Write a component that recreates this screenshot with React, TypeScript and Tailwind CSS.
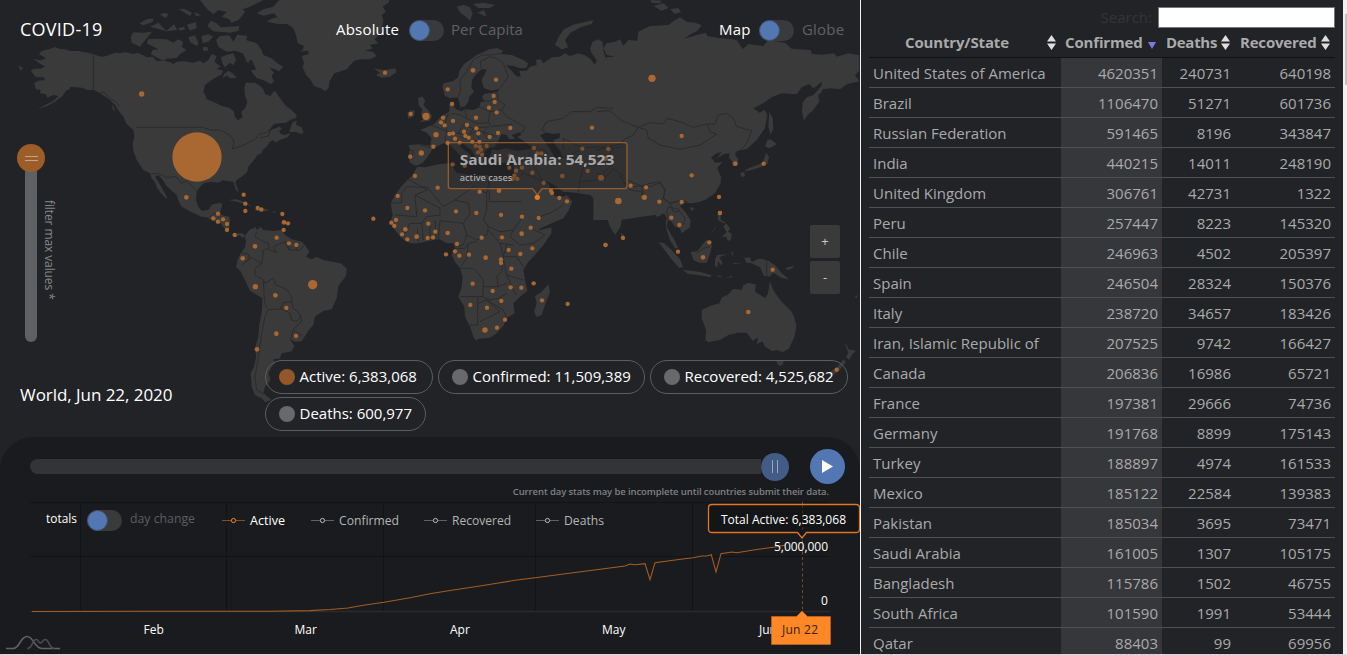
import React from "react";
import { clsx } from "clsx";

const countries: [string, number, number, number][] = [
  ["United States of America", 4620351, 240731, 640198],
  ["Brazil", 1106470, 51271, 601736],
  ["Russian Federation", 591465, 8196, 343847],
  ["India", 440215, 14011, 248190],
  ["United Kingdom", 306761, 42731, 1322],
  ["Peru", 257447, 8223, 145320],
  ["Chile", 246963, 4502, 205397],
  ["Spain", 246504, 28324, 150376],
  ["Italy", 238720, 34657, 183426],
  ["Iran, Islamic Republic of", 207525, 9742, 166427],
  ["Canada", 206836, 16986, 65721],
  ["France", 197381, 29666, 74736],
  ["Germany", 191768, 8899, 175143],
  ["Turkey", 188897, 4974, 161533],
  ["Mexico", 185122, 22584, 139383],
  ["Pakistan", 185034, 3695, 73471],
  ["Saudi Arabia", 161005, 1307, 105175],
  ["Bangladesh", 115786, 1502, 46755],
  ["South Africa", 101590, 1991, 53444],
  ["Qatar", 88403, 99, 69956],
];

type Dot = [number, number, number?];
type Region = { dx: number; dy: number; land: string; water?: string; borders: string; dots: Dot[] };

/* Every region is drawn in thirds of a pixel, shifted by dx / dy. */
const northAmerica: Region = {
  dx: 0,
  dy: 0,
  land:
    "M100,177L122,181 138,174 117,163 122,155 135,150 148,148 165,141 180,147 195,148 210,153 235,153 255,157 280,162 295,168 310,170 325,166 345,158 360,160 375,156 400,162 412,158 430,166 440,172 458,170 470,183 495,182 512,187 520,193 530,185 552,184 580,188 600,182 610,190 625,180 635,162 650,168 643,185 662,200 650,207 670,212 664,224 655,228 635,240 615,255 610,275 618,288 620,298 640,305 665,318 690,324 702,335 705,352 715,361 727,352 724,335 735,325 742,305 735,288 733,262 738,248 765,248 780,257 790,268 795,282 812,288 818,278 825,272 840,295 855,315 875,330 890,345 888,354 870,360 858,368 840,370 822,372 812,385 800,397 818,388 838,380 846,386 838,392 840,400 852,405 872,399 862,412 840,420 825,428 820,420 810,425 800,440 788,450 785,460 773,464 762,480 745,500 742,515 728,528 710,540 706,550 713,565 716,578 708,570 700,545 680,543 670,540 655,548 635,545 612,550 600,560 590,575 588,600 595,620 605,632 625,630 635,614 660,608 667,613 660,640 668,646 688,650 690,665 688,685 685,697 700,704 715,700 728,700 735,708 730,714 718,706 707,712 690,700 675,688 660,668 640,664 620,652 605,650 575,637 545,620 535,602 530,585 515,572 500,558 488,540 475,525 465,530 478,550 490,572 503,595 496,594 482,578 470,562 466,548 455,535 450,520 430,510 410,480 405,465 400,455 398,430 403,412 400,390 380,372 370,350 358,335 345,315 330,300 312,287 300,280 280,270 262,270 245,263 225,262 212,260 208,268 198,272 188,288 165,305 140,319 112,328 135,316 160,302 175,288 160,285 142,293 138,283 120,280 122,270 108,268 102,250 115,242 135,240 132,232 108,232 92,212 102,206 122,206 135,200 118,190Z" +
    "M390,374L412,386 406,392 385,378ZM352,320L358,326 352,330ZM336,316L342,322 346,335 338,328ZM868,396L876,370 890,360 888,374 905,382 911,398 902,402 888,396ZM57,196L70,205 60,212ZM684,600L710,598 738,608 758,620 735,612 705,604ZM762,630L784,624 808,630 785,637ZM815,634L826,634 824,638Z" +
    "M395,128L392,112 400,97 430,98 456,95 440,115 420,140ZM440,130L445,118 470,116 500,118 520,128 535,118 550,126 545,140 560,150 540,162 530,174 500,176 490,182 470,172 452,163 458,150 475,148ZM450,80L476,68 490,84 500,92 522,72 532,90 500,94ZM418,70L440,58 460,55 458,66 430,76ZM480,44L492,38 506,42 498,54ZM536,27L552,26 576,38 570,48ZM582,36L605,46 588,48ZM600,0L790,0 750,20 728,28 735,36 716,60 694,68 688,58 666,50 680,36 656,30 640,42 624,30 612,16ZM622,78L632,62 650,70 662,82 718,78 716,92 690,98 640,94ZM560,74L588,66 590,84 570,92ZM604,108L625,103 640,110 625,125 608,130ZM565,112L585,106 596,130 590,138 570,126ZM535,84L552,80 556,88 540,92Z" +
    "M648,120L660,108 688,106 700,125 712,104 742,108 738,120 770,130 785,150 790,165 815,175 832,190 850,200 838,214 824,208 808,202 822,218 815,228 822,245 812,252 790,240 770,234 752,212 768,208 755,180 740,184 728,160 705,152 680,155 655,140ZM662,172L680,165 700,160 708,180 700,195 690,188 675,202 668,192ZM672,222L685,212 700,222 710,234 690,235 680,226 668,236ZM608,142L622,140 625,152 610,152ZM736,182L748,178 746,190Z" +
    "M838,0L820,20 790,28 770,40 790,47 822,40 832,52 814,56 800,65 835,72 862,72 880,85 888,105 893,130 912,138 908,150 896,155 924,152 926,162 905,168 912,190 908,202 918,225 932,240 942,258 962,265 975,273 986,265 988,245 1003,220 1040,208 1062,182 1082,178 1110,178 1130,168 1118,155 1095,152 1118,145 1110,135 1135,130 1124,118 1145,95 1150,60 1145,45 1158,35 1148,20 1168,6 1166,0Z",
  borders:
    "M280,162V270L300,280 312,276 330,296 345,303 358,318M410,382H608L630,390 660,390 690,405 700,420 702,432 696,447 725,438 765,418 778,402 800,397M780,413L805,408 812,388M450,522L475,520 500,532 528,530 545,550 560,542 578,560 590,574M625,655L640,640 655,640",
  dots: [[425, 282, 8], [591, 471, 74], [559, 592, 7], [731, 584], [736, 611], [736, 633], [773, 624], [784, 628], [847, 642], [654, 641], [640, 655], [669, 658]],
};

const southAmerica: Region = {
  dx: 0,
  dy: 600,
  land:
    "M735,108L748,90 766,82 772,90 782,80 790,90 820,93 845,90 855,104 875,118 905,125 915,135 928,155 918,170 935,178 950,170 970,180 1005,187 1022,190 1040,205 1038,228 1015,258 1010,295 995,328 970,333 945,350 940,375 925,392 915,408 905,424 885,425 870,418 883,438 875,454 845,460 840,475 820,478 825,490 815,500 805,520 812,540 795,560 790,580 815,600 795,607 785,595 765,585 755,560 752,520 762,500 768,470 766,440 775,410 778,375 786,330 787,295 750,272 735,240 722,215 708,200 713,178 722,160 735,142 738,125Z",
  borders:
    "M770,95L765,110 790,125 805,130 808,150 830,158 820,140 855,125 868,150 885,150 900,150 912,135M722,158L745,162 748,178 725,195M748,170L785,190 788,172 790,150 805,145M788,190L765,205 765,225 790,240 795,250 820,235 828,255 860,268 875,290 875,305 850,308 840,328 805,328 795,350 785,400 778,450 772,490 765,530 770,570 792,582M790,240L793,300 800,325M842,325L870,340 875,360 890,365 902,350 895,335 880,325 875,305M902,345L905,365 880,388 872,418M880,390L908,408M870,128L866,150M892,128L888,150",
  dots: [[654, 65], [681, 72], [681, 90], [704, 105], [852, 67, 7], [864, 70], [851, 90], [830, 113], [765, 139, 7], [867, 130], [889, 135], [728, 175, 7], [766, 260, 8], [826, 286, 7], [938, 254, 14], [859, 324], [829, 401, 7], [888, 408], [771, 448, 7]],
};

const europe: Region = {
  dx: 990,
  dy: 0,
  land:
    "M337,262L340,250 368,244 385,232 388,212 402,192 420,180 440,165 462,155 478,148 500,144 520,152 512,162 545,165 580,180 594,190 590,203 570,205 552,198 528,196 548,215 558,228 572,230 568,212 590,212 600,200 620,195 618,180 632,178 640,190 665,172 690,170 705,160 720,168 745,160 765,166 782,178 795,195 800,180 785,160 780,145 788,125 805,118 818,126 820,150 828,180 835,195 850,205 850,610 800,610 782,585 735,578 700,575 680,560 655,545 640,545 650,565 665,592 680,602 695,588 712,602 726,608 715,632 700,655 620,690 598,672 580,640 562,610 545,580 540,560 548,540 552,510 550,485 520,490 495,485 480,470 485,450 500,440 500,420 495,440 475,445 465,455 462,470 458,495 448,490 435,470 425,450 400,432 388,420 380,425 395,445 420,462 425,475 410,485 405,490 398,475 375,450 355,432 340,430 320,440 308,445 300,460 290,475 278,488 258,498 240,488 234,470 240,450 236,435 270,433 300,437 305,415 290,398 270,390 290,382 312,372 328,355 345,342 358,335 358,312 372,302 374,325 390,332 390,318 384,292 360,294 345,288Z" +
    "M264,293L278,290 286,302 280,315 296,332 306,348 300,362 268,367 282,355 272,342 278,330 266,315ZM232,340L240,332 254,330 253,348 235,356ZM130,205L145,208 165,210 195,205 200,216 180,230 155,233 138,226 150,218ZM380,20L400,14 420,22 428,40 420,62 405,48 392,40ZM428,12L460,8 495,14 480,24 445,24ZM442,38L462,30 470,50ZM675,135L685,112 702,88 730,74 790,60 785,72 752,82 722,98 705,120 715,142 695,148Z",
  water:
    "M392,320L404,320 415,305 418,290 432,275 424,262 426,240 436,225 455,208 470,208 465,222 454,240 462,265 485,272 510,266 502,275 475,280 462,282 456,292 464,302 452,306 448,322 430,330 405,328 390,335ZM500,440L505,420 515,402 530,405 538,418 555,416 545,405 565,398 575,403 562,412 585,425 605,440 600,448 560,452 530,445 505,450 488,450ZM630,405L650,398 670,402 690,400 688,415 670,420 680,440 692,455 695,470 675,475 665,455 655,440 645,425Z",
  borders:
    "M384,292L392,270 390,240 410,215 430,180 455,165 480,165 515,160M455,208L450,185 480,170 500,175 520,190 535,230 510,265M500,272L505,300 525,315 515,330 530,350 585,380 580,395 560,400M455,305L500,300M450,322L480,335 515,330M480,335L475,365 485,380 545,372M405,330L410,355 390,345 365,340M410,355L440,370 475,368M300,375L330,385 350,395 345,425M355,342L345,370 350,395 385,400 400,375 430,385 480,380M385,400L420,405 440,390 470,400 500,410M430,385L420,400M390,410L420,420 450,425 495,425M440,395L450,425 455,450M470,385L460,400 475,420M240,450L250,452 245,480M270,435L312,445M850,325L800,322 780,335 725,335 700,355 650,365 635,390 650,400M700,415L730,430 760,445 800,440 850,445M700,415V450M600,440L640,450 655,460M600,455L595,480 555,485M595,480L620,510 640,545M695,470L740,475 760,500 750,540 745,578M690,475L720,465 760,445M760,500L800,495 830,470M750,545L800,540 850,490M555,485L580,520 550,545M580,520L620,535 640,545",
  dots: [[165, 218], [429, 211, 7], [498, 239], [353, 268], [366, 312], [491, 288], [494, 306], [477, 323], [500, 337], [438, 353], [242, 342], [288, 349, 11], [339, 353], [333, 367], [344, 376], [369, 363], [318, 404, 8], [411, 375], [439, 385], [445, 400], [541, 384], [402, 395], [358, 402], [369, 400], [406, 408], [416, 413], [375, 416], [389, 428], [353, 429], [310, 440], [274, 459, 8], [241, 470], [479, 411], [504, 399], [427, 426], [448, 426], [437, 438], [449, 440], [453, 449], [470, 438], [444, 457], [456, 464], [786, 383], [612, 444], [622, 460], [634, 460], [540, 467], [757, 446], [835, 447], [255, 528], [323, 563], [368, 493], [404, 497], [449, 575], [507, 572, 7], [538, 503], [558, 512], [576, 503], [607, 518], [553, 527], [548, 537], [562, 537], [641, 549], [697, 528, 7], [773, 513], [813, 533, 9], [203, 588], [232, 624], [285, 631], [378, 634], [439, 639], [513, 645], [663, 573], [666, 579], [688, 594], [711, 604], [130, 656]],
};

const asia: Region = {
  dx: 1800,
  dy: 0,
  land:
    "M-20,210L0,202 18,172 45,170 20,165 10,145 20,130 45,125 60,118 70,138 85,120 112,122 115,95 150,78 205,75 225,60 240,52 262,66 285,68 305,76 292,92 270,104 252,116 290,105 318,98 322,108 360,115 400,118 412,122 428,147 445,132 490,138 505,120 555,128 575,146 632,150 636,162 665,164 702,160 710,170 745,160 778,166 778,212 765,225 778,244 742,252 720,268 690,265 668,268 665,276 655,285 658,305 640,330 622,346 612,362 606,335 608,308 620,292 640,285 664,258 666,244 650,258 640,265 628,252 605,262 590,283 545,280 515,292 490,310 460,325 478,338 494,330 502,345 495,385 470,420 440,448 412,452 405,465 415,478 410,498 398,498 395,482 386,472 390,460 372,462 350,475 365,456 350,460 333,472 345,488 368,486 352,503 362,530 362,550 345,580 315,600 285,608 260,605 200,640 60,660 -20,660Z" +
    "M508,335L518,355 520,385 512,405 505,380ZM502,420L512,418 530,432 518,440 506,445 495,438ZM498,458L507,470 502,492 480,502 455,510 432,514 445,505 470,496 488,488ZM420,520L432,515 435,528 425,532ZM150,0L185,2 180,10 155,8ZM160,18L190,10 206,24 185,32ZM210,28L235,24 243,36 225,42Z",
  borders:
    "M-10,335L30,332 65,362 115,382 150,368 190,372 200,355 240,365 280,382 320,372 345,372 355,345 380,340 400,355 410,380 455,392 440,430 425,448 405,458M320,372L330,395 350,402 300,435 240,448 180,435 145,415 140,390 115,382 100,405 70,420 65,440 40,445 30,465 0,470M-10,450L65,430M-10,520L20,530 40,505 60,520 70,545 95,560 125,558 150,560 180,548 195,570 190,595 210,610 240,602 262,605M70,545L90,570 125,575 130,600",
  dots: [[156, 235, 11], [245, 408], [406, 491, 7], [491, 491], [275, 526], [357, 591], [55, 603, 10], [92, 557], [138, 562], [133, 592, 8], [178, 605], [245, 606], [360, 639], [214, 653], [25, 447], [15, 475, 8]],
};

const africa: Region = {
  dx: 1020,
  dy: 540,
  land:
    "M200,2L215,-12 232,-40 255,-38 300,-48 338,-50 340,-35 350,-22 385,-15 400,-5 415,-15 440,-15 470,0 505,-5 525,15 540,60 555,90 570,120 580,140 600,150 635,142 634,160 610,195 585,225 565,245 550,270 555,300 562,332 540,350 520,370 524,400 498,415 492,435 470,460 450,473 415,476 408,482 400,470 390,440 375,410 373,380 355,350 365,320 368,290 360,265 345,245 335,225 345,205 340,190 320,190 300,178 270,182 235,190 210,190 185,175 165,150 150,130 158,105 152,70 165,45 185,18Z" +
    "M625,313L630,335 615,375 605,405 590,411 582,395 590,370 585,348 605,335ZM515,0L530,40 560,90 578,120 582,132 600,130 640,115 670,95 697,65 680,45 662,55 640,45 625,10Z",
  borders:
    "M152,70L185,68V40L200,20 262,22M200,-5L262,30 225,45 230,110 165,105M262,22L310,80 345,60 400,20M225,45L300,85 300,105 260,110 245,130 210,130M345,60L385,70 390,100 370,130 300,122 295,178M400,20L440,40 448,0V65H545M440,40V90L430,120 445,140 440,165 410,180 380,165 370,195 350,200M370,130L380,165M445,140L480,155 520,150 545,115M520,150L510,170 540,195 580,190 615,165 575,145M445,150L480,190 520,195M340,205L375,205 385,190 410,185M385,190L380,235 360,262M480,190L490,230 485,275 470,290 475,320 430,320 428,350 360,350M360,265L400,265 415,280 430,300V320M500,195L490,230 530,230 550,260M490,235L500,285 550,300M500,285L520,330 530,345M475,320L500,310M428,350L450,360 475,355 500,340M413,352V435L380,437M415,370L440,360 490,390 500,415M440,360L480,395 420,425M245,130L250,180M270,130V180M285,120L288,180M210,130L195,160 185,175M232,145L235,188M585,125L600,110 640,95 670,75",
  dots: [[154, 128], [168, 120], [163, 138], [186, 163], [196, 148, 7], [202, 178], [230, 170, 7], [265, 131], [263, 174], [279, 172], [286, 155], [323, 159, 7], [351, 192], [425, 173], [486, 172], [345, 214], [358, 227], [387, 224], [318, 223], [437, 233, 7], [545, 161, 7], [546, 110], [572, 143], [577, 205], [506, 210], [541, 222], [483, 238], [483, 249], [514, 266], [398, 311], [458, 333], [512, 322], [544, 323], [581, 310], [484, 363], [391, 375], [441, 383], [495, 419], [435, 450, 8], [471, 443], [606, 361], [683, 372], [596, 114], [797, 195]],
};

const oceania: Region = {
  dx: 1800,
  dy: 540,
  land:
    "M-20,-10L365,-10 355,20 335,45 300,65 275,70 255,68 240,78 255,95 272,120 270,142 245,160 240,145 225,140 215,125 204,120 200,138 210,158 222,178 235,205 225,205 210,180 200,150 197,130 200,115 190,95 180,108 168,110 165,85 150,65 135,60 125,65 105,75 90,90 66,112 62,140 45,165 30,140 18,105 12,65 -5,60 -20,50Z" +
    "M62,158L72,165 74,180 65,180ZM270,82L284,84 275,94ZM175,186L192,190 215,210 240,238 250,262 238,264 212,235 192,208ZM248,270L275,272 305,277 335,286 330,292 300,286 265,282ZM345,287L365,287 362,292ZM375,295L395,288 398,292ZM272,216L292,214 318,180 330,184 336,198 330,222 320,248 298,248 280,240ZM345,238L352,225 382,222 358,232 368,250 362,256 355,244 352,262 345,258ZM392,218L398,215 400,230ZM395,248L425,250 405,252ZM432,233L450,232 455,246 472,238 485,236 508,244 528,258 545,280 568,298 545,294 520,278 508,290 492,288 480,262 455,250 440,248ZM555,265L578,258 582,262 565,270ZM352,100L362,105 362,120 378,128 370,130 354,120ZM370,140L378,130 390,145 385,155 396,162 392,180 384,182 378,170 365,170 380,156ZM328,165L348,140 346,146ZM670,374L684,386ZM764,350L774,345 770,355Z" +
    "M305,390L330,378 358,370 366,352 382,345 400,326 425,330 430,315 445,308 468,314 465,335 495,354 504,340 510,304 520,330 530,345 545,365 575,395 582,410 589,435 585,465 568,505 548,516 530,510 518,514 495,500 488,485 470,492 475,472 458,482 440,458 415,458 385,465 360,480 325,487 316,480 318,450 305,415ZM528,540L552,540 548,554 540,558 532,552ZM733,487L742,498 745,508 768,512 755,525 748,540 738,532 745,518ZM730,538L738,545 715,575 695,588 685,580 712,560Z",
  borders:
    "M75,-20L60,-5M80,0L125,18 150,10 180,5 195,30 190,55 210,70 220,95 240,95 255,115 250,135M190,55L175,65M210,70L240,62 262,66M204,118L200,95 205,80 240,90M500,242V290M290,220L310,205 330,200M125,18L132,55",
  dots: [[69, 174], [16, 195], [234, 215], [328, 187], [309, 232, 7], [518, 269], [238, 135], [360, 99], [445, 396, 7], [710, 569]],
};

const regions = [northAmerica, southAmerica, europe, asia, africa, oceania];

function WorldMap() {
  return (
    <svg className="absolute inset-0 h-[437px] w-[860px]" viewBox="0 0 2580 1311">
      {regions.map((r, i) => (
        <g key={i} transform={`translate(${r.dx} ${r.dy})`}>
          <path d={r.land} fill="#3a3a3a" />
          {r.water && <path d={r.water} fill="#222326" />}
        </g>
      ))}
      {regions.map((r, i) => (
        <g key={i} transform={`translate(${r.dx} ${r.dy})`}>
          <path d={r.borders} fill="none" stroke="#28292b" strokeWidth="2.6" strokeLinejoin="round" />
        </g>
      ))}
      {regions.map((r, i) => (
        <g key={i} transform={`translate(${r.dx} ${r.dy})`} fill="#a96731">
          {r.dots.map(([x, y, radius = 6.5], j) => (
            <circle key={j} cx={x} cy={y} r={radius} />
          ))}
        </g>
      ))}
      <path
        d="M1352,428H1874Q1881,428 1881,435V559Q1881,566 1874,566H1626L1612,585 1598,566H1352Q1345,566 1345,559V435Q1345,428 1352,428Z"
        fill="#222326"
        fillOpacity="0.35"
        stroke="#b3692c"
        strokeOpacity="0.75"
        strokeWidth="4"
      />
      <circle cx="1612" cy="592" r="8" fill="#e07b2c" />
      <g fill="#a9a9aa" fontFamily="Open Sans, sans-serif" fontWeight="700">
        <text x="1379" y="494" fontSize="45" textLength="464" lengthAdjust="spacingAndGlyphs">Saudi Arabia: 54,523</text>
        <text x="1379" y="543" fontSize="28" fontWeight="600" textLength="158" lengthAdjust="spacingAndGlyphs">active cases</text>
      </g>
    </svg>
  );
}

function Toggle() {
  return (
    <span className="block h-[21px] w-[35px] rounded-full bg-[#3a3a3a]">
      <span className="block size-[21px] rounded-full border border-[#3f4f70] bg-[#5377b3]" />
    </span>
  );
}

function Stat({ label, active, className }: { label: string; active?: boolean; className: string }) {
  return (
    <div className={clsx("flex h-[34px] items-center rounded-full border border-[#5c5d5f] pl-[13px] text-[15px] text-white", className)}>
      <span className={clsx("mr-[5px] size-4 shrink-0 rounded-full", active ? "bg-[#93572a]" : "bg-[#68696c]")} />
      <span className="whitespace-nowrap pb-[2px]">{label}</span>
    </div>
  );
}

const series = [
  { name: "Active", x: 222, width: 35 },
  { name: "Confirmed", x: 311, width: 60 },
  { name: "Recovered", x: 424, width: 59 },
  { name: "Deaths", x: 536, width: 40 },
];

function Chart() {
  return (
    <svg className="block h-[153px] w-[860px]" viewBox="0 501 860 153" fontFamily="Open Sans, sans-serif" fontSize="12">
      <path d="M30,502.500H830M30,556.500H830M80.500,502V611M226.500,502V611M383.500,502V611M535.500,502V611M692.500,502V611" stroke="#121315" fill="none" />
      <path d="M30,611.500H830" stroke="#2a2b2d" strokeWidth="1.3" />
      <path
        d="M32,611.500L150,611.300 270,611.300 310,610.600 330,609.500 348,608 362,605.500 384,602.300 410,597.700 430,593.700 450,590.500 475,586.700 497,583.300 515,580.300 535,577.700 577,572.300 604,568.800 625,566 630,564 635,564.700 645,563.700 650,579.700 655,562.700 675,560 692.700,557.700 702,556 707,556 711.300,554.700 716,572 721,553.700 731.700,552 736.700,552.700 755,549.700 775,547 786,545"
        fill="none"
        stroke="#a65c21"
        strokeWidth="1.1"
      />
      <path d="M802.500,502V611" stroke="#7c4620" strokeDasharray="3 2.500" />
      {series.map((s, i) => (
        <g key={s.name}>
          <path d={`M${s.x},520.500h23`} stroke={i === 0 ? "#884c1f" : "#606164"} />
          <circle cx={s.x + 11.5} cy="520.500" r="2.100" fill="#1a1b1e" stroke={i === 0 ? "#f0852c" : "#bdbdbd"} />
          <text x={s.x + 28} y="525" textLength={s.width} fill={i === 0 ? "#ffffff" : "#b4b5b6"} lengthAdjust="spacingAndGlyphs">
            {s.name}
          </text>
        </g>
      ))}
      <g fill="#ffffff">
        <text x="46" y="523" textLength="31" lengthAdjust="spacingAndGlyphs">totals</text>
        <text x="130" y="523" textLength="65" lengthAdjust="spacingAndGlyphs" fill="#5d5e60">day change</text>
        <text x="774" y="551" textLength="54">5,000,000</text>
        <text x="821" y="605">0</text>
        <text x="143.500" y="634">Feb</text>
        <text x="294.500" y="634">Mar</text>
        <text x="450" y="634">Apr</text>
        <text x="602" y="634">May</text>
        <text x="759" y="634">Jun</text>
      </g>
      <path d="M712,504.500H856Q859.500,504.500 859.500,508V529Q859.500,532.500 856,532.500H806.500L802,538 797.500,532.500H712Q708.500,532.500 708.500,529V508Q708.500,504.500 712,504.500Z" fill="#141517" stroke="#dd7626" strokeWidth="1.300" />
      <path d="M802.500,505V532" stroke="#7c4620" strokeOpacity="0.5" strokeDasharray="3 2.500" />
      <text x="721" y="524" fill="#ffffff" textLength="125">Total Active: 6,383,068</text>
      <path d="M771.500,616.500H796.500L802,611 807.500,616.500H830.500V644.500H771.500Z" fill="#ff8726" stroke="#c76a20" strokeWidth="0.600" />
      <text x="782" y="634" fill="#33200f" textLength="36">Jun 22</text>
      <g fill="none" strokeWidth="1.600">
        <path d="M6,648.500H13C20,648.500 20,636.500 27,636.500S34,648.500 42,648.500H60" stroke="#606163" />
        <path d="M27,648.500C33,648.500 32,639.500 36,639.500C39,639.500 38,643 40.500,643C43,643 42,639.500 45.500,639.500C49,639.500 49,648 54,648.500" stroke="#4b4c4e" />
      </g>
    </svg>
  );
}

function SortIcon() {
  return (
    <svg className="h-[15px] w-[9px]" viewBox="0 0 9 15" fill="#dedede">
      <path d="M4.500,0L9,6.500H0ZM4.500,15L9,8.500H0Z" />
    </svg>
  );
}

export default function App() {
  return (
    <div className="h-[655px] w-[1347px] overflow-hidden bg-[#222326] font-['Open_Sans',sans-serif]">
      <div className="flex h-[654px]">
        <main className="flex w-[860px] shrink-0 flex-col">
          <section className="relative h-[437px]">
            <WorldMap />
            <header className="relative flex h-[60px] items-center text-[15px] text-white">
              <h1 className="ml-5 w-[316px] pb-px text-[18px] tracking-[0.25px]">COVID-19</h1>
              <span className="w-[73px] pb-[2px] tracking-[0.2px]">Absolute</span>
              <Toggle />
              <span className="ml-[7px] w-[268px] pb-[2px] text-[#606164]">Per Capita</span>
              <span className="w-[40px] pb-[2px] tracking-[0.2px]">Map</span>
              <Toggle />
              <span className="ml-[8px] pb-[2px] tracking-[0.2px] text-[#606164]">Globe</span>
            </header>

            <div className="absolute left-[17px] top-[144px] flex w-[28px] flex-col items-center">
              <span className="z-10 flex size-7 flex-col items-center justify-center gap-[3px] rounded-full bg-[#9d5d28]">
                <span className="h-px w-[13px] bg-[#c1a58c]" />
                <span className="h-px w-[13px] bg-[#c1a58c]" />
              </span>
              <span className="-mt-1 h-[174px] w-3 rounded-b-full bg-[#5f6064]" />
            </div>
            <span className="absolute left-[41px] top-[200px] whitespace-nowrap text-[12px] leading-[16px] tracking-[-0.1px] text-[#85868a] [writing-mode:vertical-rl]">filter max values *</span>

            <div className="absolute left-[810px] top-[225px] flex flex-col gap-[3px] text-[13px] text-[#c9c9c9]">
              <button className="flex h-[33px] w-[30px] items-center justify-center rounded-[2px] bg-[#3a3a3a]">+</button>
              <button className="flex h-[33px] w-[30px] items-center justify-center rounded-[2px] bg-[#3a3a3a]">-</button>
            </div>

            <p className="absolute left-[20px] top-[382px] whitespace-nowrap text-[17px] tracking-[-0.05px] text-white">World, Jun 22, 2020</p>
            <div className="absolute left-[264.500px] top-[360px] flex w-[590px] flex-wrap gap-x-[5px] gap-y-[3px]">
              <Stat label="Active: 6,383,068" active className="w-[168px]" />
              <Stat label="Confirmed: 11,509,389" className="w-[207px]" />
              <Stat label="Recovered: 4,525,682" className="w-[198px]" />
              <Stat label="Deaths: 600,977" className="w-[161px]" />
            </div>
          </section>

          <section className="h-[217px] rounded-t-[33px] bg-[#1a1b1e]">
            <div className="flex h-[48px] items-center pl-[30px] pt-[11px]">
              <span className="h-[15px] w-[731px] rounded-l-full bg-[#333436]" />
              <span className="flex size-7 items-center justify-center gap-[4px] rounded-full bg-[#435b87]">
                <span className="h-[13px] w-px bg-[#9aa6bb]" />
                <span className="h-[13px] w-px bg-[#9aa6bb]" />
              </span>
              <span className="ml-[21px] flex size-[35px] items-center justify-center rounded-full bg-[#5377b3]">
                <svg className="h-[13px] w-[11px]" viewBox="0 0 11 13" fill="#ffffff">
                  <path d="M0,0L11,6.500 0,13Z" />
                </svg>
              </span>
            </div>
            <p className="h-4 whitespace-nowrap pr-[31px] text-right text-[9.500px] font-semibold leading-[13px] tracking-[-0.1px] text-[#7f8082]">
              Current day stats may be incomplete until countries submit their data.
            </p>
            <div className="relative">
              <Chart />
              <div className="absolute left-[87px] top-[9px]">
                <Toggle />
              </div>
            </div>
          </section>
        </main>

        <aside className="w-[483px] shrink-0 overflow-hidden border-l border-[#f2f2f2] pl-[8px] pt-[7px]">
          <div className="flex h-[21px] w-[466px] items-center justify-end text-[15px] text-[#343538]">
            <span className="mr-[6px] pb-px">Search:</span>
            <input aria-label="Search" className="h-[21px] w-[177px] border border-[#777777] bg-white" />
          </div>
          <table className="w-[466px] table-fixed border-separate border-spacing-0 text-[15px] text-[#a9aaab]">
            <colgroup>
              <col className="w-[192px]" />
              <col className="w-[101px]" />
              <col className="w-[73px]" />
              <col className="w-[100px]" />
            </colgroup>
            <thead>
              <tr className="h-[30px] text-[15px] font-bold tracking-[-0.15px]">
                <th className="border-b border-[#111111] p-0">
                  <span className="flex items-center pl-[36px] pr-[5px]">Country/State<span className="ml-auto"><SortIcon /></span></span>
                </th>
                <th className="border-b border-[#111111] p-0">
                  <span className="flex items-center justify-between pl-[4px] pr-[6px]">
                    Confirmed
                    <svg className="mt-[5px] h-[7px] w-[8px]" viewBox="0 0 8 7" fill="#7a7ae6"><path d="M0,0H8L4,7Z" /></svg>
                  </span>
                </th>
                <th className="border-b border-[#111111] p-0">
                  <span className="flex items-center justify-between pl-[4px] pr-[5px] tracking-[-0.3px]">Deaths<SortIcon /></span>
                </th>
                <th className="border-b border-[#111111] p-0">
                  <span className="flex items-center justify-between pl-[5px] pr-[5px] tracking-[-0.2px]">Recovered<SortIcon /></span>
                </th>
              </tr>
            </thead>
            <tbody>
              {countries.map(([name, confirmed, deaths, recovered]) => (
                <tr key={name} className="h-[30px] text-right">
                  <td className="border-b border-[#505153] px-1 pb-0 pt-[2px] text-left">{name}</td>
                  <td className="border-b border-[#505153] bg-[#36373a] px-1 pb-0 pt-[2px]">{confirmed}</td>
                  <td className="border-b border-[#505153] px-1 pb-0 pt-[2px]">{deaths}</td>
                  <td className="border-b border-[#505153] px-1 pb-0 pt-[2px]">{recovered}</td>
                </tr>
              ))}
            </tbody>
          </table>
        </aside>
        <div className="w-[4px] shrink-0 bg-[#f1f1f1] pl-[2px] pt-[14px]">
          <div className="h-[71px] bg-[#c1c1c1]" />
        </div>
      </div>
      <div className="h-px bg-[#cfdbe3]" />
    </div>
  );
}
